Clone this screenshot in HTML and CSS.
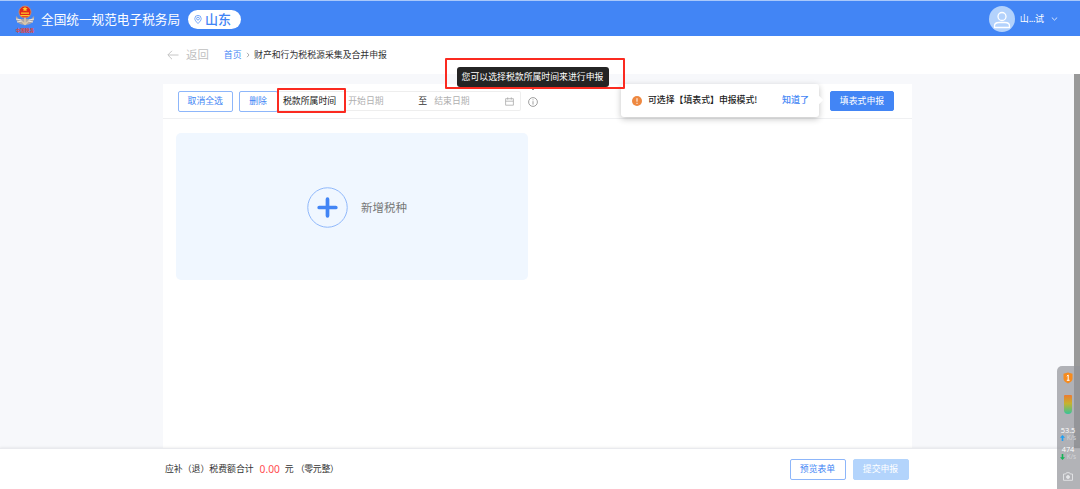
FILE: index.html
```html
<!DOCTYPE html>
<html lang="zh-CN">
  <head>
    <meta charset="UTF-8" />
    <meta name="viewport" content="width=device-width, initial-scale=1.0" />
    <title>财产和行为税税源采集及合并申报</title>
    <link rel="stylesheet" href="styles.css">
  </head>
  <body>
    <header class="header">
      <svg class="emblem" viewBox="0 0 20 28">
        <path d="M1 11c-1 5 3 9 9 9s10-4 9-9l-3 3H4z" fill="#a9a4a8" />
        <path d="M1 14l5 1M2 17l5-1M19 14l-5 1M18 17l-5-1" stroke="#e9e5df" stroke-width="1" />
        <circle cx="10" cy="7" r="6" fill="#e0281c" stroke="#d9905c" stroke-width="0.8" />
        <path d="M10 1.500l.8 1.600 1.800.2-1.300 1.200.3 1.800L10 5.500l-1.600.8.3-1.800-1.300-1.200 1.800-.2zM6 7.500h8v1.300H6zM5.500 10h9v1.300h-9z" fill="#ffc928" />
        <path d="M10 12.500v7M7 16.500l3 3 3-3" stroke="#d8c8ab" stroke-width="1.500" fill="none" />
        <text x="10" y="26.500" text-anchor="middle">中国税务</text>
      </svg>
      <h1>全国统一规范电子税务局</h1>
      <div class="region">
        <svg width="8" height="9" viewBox="0 0 8 9" fill="none" stroke="#4285f5" stroke-width="0.7">
          <path d="M4 8.500C2 6.500.8 5.200.8 3.600a3.200 3.200 0 0 1 6.400 0C7.200 5.200 6 6.500 4 8.500z" />
          <circle cx="4" cy="3.600" r="1.400" />
        </svg>
        <span>山东</span>
      </div>
      <div class="user">
        <svg class="avatar" viewBox="0 0 26 26" fill="none" stroke="#fff" stroke-width="1.300">
          <circle cx="13" cy="13" r="13" fill="#b3d2fc" stroke="none" />
          <circle cx="13" cy="10.500" r="4" />
          <path d="M5.500 21.500v-1.500c0-2.200 2-3.500 4.500-3.500h6c2.500 0 4.500 1.300 4.500 3.500v1.500z" />
        </svg>
        <span>山<span class="dots">...</span>试</span>
        <svg class="chevron" viewBox="0 0 7 4" fill="none" stroke="#fff" stroke-width="0.8">
          <path d="M.8.5l2.700 2.600L6.200.5" />
        </svg>
      </div>
    </header>

    <nav class="nav">
      <svg class="back-icon" viewBox="0 0 12 10" fill="none" stroke="#bfbfbf" stroke-width="0.9">
        <path d="M11.500 5H1M5 .8L.8 5 5 9.200" />
      </svg>
      <span class="back">返回</span>
      <a class="home">首页</a>
      <svg class="sep" viewBox="0 0 4 6" fill="none" stroke="#888" stroke-width="0.7">
        <path d="M1 .8L3 3 1 5.200" />
      </svg>
      <span class="current">财产和行为税税源采集及合并申报</span>
    </nav>

    <main class="main">
      <section class="panel">
        <div class="toolbar">
          <button class="btn select-all">取消全选</button>
          <button class="btn delete">删除</button>
          <div class="date-range">
            <span class="date-label">税款所属时间</span>
            <span class="start">开始日期</span>
            <span class="to">至</span>
            <span class="end">结束日期</span>
            <svg class="calendar" viewBox="0 0 9 9" fill="none" stroke="#aaa" stroke-width="0.8">
              <path d="M.6 1.700h7.800v6.500H.6zM.6 4.200h7.800M2.700.4v2.200M6.300.4v2.200" />
            </svg>
          </div>
          <div class="info">
            <svg viewBox="0 0 10 10" fill="none" stroke="#777" stroke-width="0.7">
              <circle cx="5" cy="5" r="4.400" />
              <path d="M5 4.200v3.400M5 2.400v.9" />
            </svg>
            <div class="tooltip">您可以选择税款所属时间来进行申报</div>
          </div>
          <button class="btn primary form-mode">填表式申报</button>
          <div class="popover">
            <svg class="warn" viewBox="0 0 10 10">
              <circle cx="5" cy="5" r="5" fill="#ee8840" />
              <path d="M5 2.200v3.500M5 6.800v1.100" stroke="#fff" stroke-width="1" />
            </svg>
            <span>可选择【填表式】申报模式!</span>
            <a>知道了</a>
          </div>
        </div>
        <div class="add-card">
          <svg viewBox="0 0 42 42" fill="none" stroke="#4285f5">
            <circle cx="21" cy="21" r="20.200" stroke="#8db6fa" stroke-width="1" />
            <path d="M21 12.500v17M12.500 21h17" stroke-width="3.800" stroke-linecap="round" />
          </svg>
          <span>新增税种</span>
        </div>
      </section>
      <div class="scrollbar"></div>
    </main>

    <footer class="footer">
      <span>应补（退）税费额合计</span>
      <span class="amount">0.00</span>
      <span>元</span>
      <span class="words">（零元整）</span>
      <button class="btn preview">预览表单</button>
      <button class="btn submit">提交申报</button>
    </footer>

    <!-- highlighted areas -->
    <div class="mark mark-label"></div>
    <div class="mark mark-tip"></div>

    <!-- desktop monitor widget -->
    <aside class="monitor">
      <svg class="shield" viewBox="0 0 10 12">
        <path d="M5 .5l4.500 1.300v5C9.500 9 7.500 10.500 5 11.500 2.500 10.500.5 9 .5 6.800v-5z" fill="#f68b1e" />
        <path d="M3.800 4.200L5.200 3v5.300M3.800 8.300h2.800" stroke="#fff" stroke-width="1" fill="none" />
      </svg>
      <div class="gauge"></div>
      <div class="speed">
        53.5
        <small>
          <svg viewBox="0 0 5 6"><path d="M2.500 0L5 2.800H3.300V6H1.700V2.800H0z" fill="#1ea0f5" /></svg>
          K/s
        </small>
      </div>
      <div class="speed">
        474
        <small>
          <svg viewBox="0 0 5 6"><path d="M2.500 6L5 3.200H3.300V0H1.700v3.200H0z" fill="#16b458" /></svg>
          K/s
        </small>
      </div>
      <svg class="camera" viewBox="0 0 10 9" fill="none" stroke="#e4e5e8" stroke-width="0.9">
        <path d="M.5 2h2.200l.8-1.300h3L7.300 2h2.200v6.300h-9z" />
        <circle cx="5" cy="5" r="1.500" fill="#e4e5e8" />
      </svg>
    </aside>
  </body>
</html>
```
FILE: styles.css
```css
* {
  box-sizing: border-box;
}

body {
  margin: 0;
  height: 489px;
  display: flex;
  flex-direction: column;
  position: relative;
  overflow: hidden;
  font-family: "Noto Sans CJK SC", sans-serif;
  font-size: 8.87px;
  line-height: 1.4;
  color: #333;
  background-color: #f7f8fb;
}

svg {
  display: block;
  flex: none;
}

span,
a {
  white-space: nowrap;
}

.header {
  height: 36px;
  flex: none;
  display: flex;
  align-items: center;
  padding: 1px 22px 0 15px;
  border-top: 1px solid #a9c8fa;
  background-color: #4285f5;
  color: #fff;
}

.emblem {
  width: 20px;
  height: 28px;
}

.emblem text {
  font-size: 4.6px;
  font-weight: bold;
  fill: #e5412f;
}

.header h1 {
  margin: 0 0 0 6px;
  font-size: 12.65px;
  font-weight: 400;
}

.region {
  display: flex;
  align-items: center;
  gap: 3px;
  width: 53px;
  height: 19px;
  margin: 1px 0 0 8px;
  padding-left: 6px;
  border-radius: 10px;
  background-color: #fff;
  color: #4285f5;
  font-size: 13px;
  font-weight: 500;
}

.user {
  display: flex;
  align-items: center;
  margin-left: auto;
  font-size: 9px;
}

.dots {
  letter-spacing: -0.4px;
}

.avatar {
  width: 26px;
  height: 26px;
  margin-right: 5px;
}

.chevron {
  width: 7px;
  height: 4px;
  margin-left: 7px;
}

.nav {
  height: 38px;
  flex: none;
  display: flex;
  align-items: center;
  padding-left: 167px;
  background-color: #fff;
}

.back-icon {
  width: 12px;
  height: 10px;
}

.back {
  margin-left: 7px;
  font-size: 11.4px;
  color: #bfbfbf;
}

.home {
  margin-left: 15px;
  color: #4285f5;
}

.sep {
  width: 4px;
  height: 6px;
  margin: 0 4.5px 0 4px;
}

.main {
  flex: 1;
  display: flex;
  padding-left: 163px;
}

.panel {
  width: 749px;
  margin-top: 10px;
  background-color: #fff;
}

.toolbar {
  position: relative;
  display: flex;
  align-items: center;
  height: 35px;
  padding: 0 18px 0 14.5px;
  border-bottom: 1px solid #eff0f2;
}

.btn {
  height: 21px;
  padding: 0;
  border: 1px solid #8db6fa;
  border-radius: 2px;
  background-color: #fff;
  color: #4285f5;
  font: inherit;
}

.select-all {
  width: 55.5px;
}

.delete {
  width: 39px;
  margin-left: 5.5px;
}

.date-range {
  display: flex;
  align-items: center;
  width: 243px;
  height: 20px;
  padding: 0 6px 0 5.5px;
  border: 1px solid #eee;
  border-left: none;
  border-radius: 2px;
  color: #b0b0b0;
}

.date-label {
  color: #222;
}

.start {
  width: 70px;
  margin-left: 12px;
}

.to {
  width: 16px;
  color: #333;
}

.calendar {
  width: 9px;
  height: 9px;
  margin-left: auto;
}

.info {
  position: relative;
  margin: 1px 0 0 7px;
}

.info svg {
  width: 10px;
  height: 10px;
}

.tooltip {
  position: absolute;
  left: -71px;
  bottom: 20px;
  width: 152px;
  height: 20px;
  border-radius: 3px;
  background-color: #242424;
  color: #fff;
  line-height: 20px;
  text-align: center;
  white-space: nowrap;
}

.tooltip::after {
  content: "";
  position: absolute;
  left: 73px;
  top: 20px;
  border: 3px solid transparent;
  border-top-color: #242424;
}

.primary {
  border-color: #4285f5;
  background-color: #4285f5;
  color: #fff;
}

.form-mode {
  width: 64px;
  height: 20px;
  margin-left: auto;
}

.popover {
  position: absolute;
  left: 458px;
  top: 0;
  display: flex;
  align-items: center;
  width: 198px;
  height: 33px;
  padding: 0 10px 0 11px;
  border-radius: 3px;
  background-color: #fff;
  box-shadow: 0 2px 6px rgba(0, 0, 0, 0.24);
  color: #222;
  font-weight: 500;
}

.popover::after {
  content: "";
  position: absolute;
  right: -3px;
  top: 13px;
  width: 6px;
  height: 6px;
  background-color: #fff;
  transform: rotate(45deg);
}

.warn {
  width: 10px;
  height: 10px;
  margin-right: 6px;
}

.popover a {
  margin-left: auto;
  color: #4285f5;
  font-size: 9px;
}

.add-card {
  display: flex;
  align-items: center;
  width: 352px;
  height: 147px;
  margin: 14px 0 0 13px;
  padding: 1px 0 0 131px;
  border-radius: 5px;
  background-color: #f0f7ff;
  color: #777;
  font-size: 11.5px;
}

.add-card svg {
  width: 41px;
  height: 41px;
  margin-right: 13px;
}

.scrollbar {
  width: 6px;
  margin-left: auto;
  background-color: #999;
}

.footer {
  height: 41px;
  flex: none;
  display: flex;
  align-items: center;
  padding: 1px 171.5px 0 165px;
  border-top: 1px solid #e9eaee;
  background-color: #fff;
  box-shadow: 0 -1px 2px rgba(0, 0, 0, 0.06);
}

.amount {
  margin: 0 5px 0 6px;
  color: #ff4d4f;
  font-family: "Noto Sans", sans-serif;
  font-size: 10.2px;
}

.words {
  margin-left: 2px;
  letter-spacing: -0.3px;
}

.preview {
  width: 56px;
  margin-left: auto;
}

.submit {
  width: 56px;
  margin-left: 7px;
  border-color: #b3d4fc;
  background-color: #b3d4fc;
  color: #fff;
}

.mark {
  position: absolute;
  border: 2px solid #fb2a20;
  border-radius: 1px;
}

.mark-label {
  left: 277px;
  top: 88px;
  width: 69px;
  height: 25px;
}

.mark-tip {
  left: 445px;
  top: 58px;
  width: 180px;
  height: 31px;
}

.monitor {
  position: absolute;
  right: 0;
  bottom: 0;
  display: flex;
  flex-direction: column;
  align-items: center;
  width: 23px;
  height: 123px;
  padding: 6px 1px 0 0;
  border-radius: 5px 0 0 0;
  background-color: rgba(145, 147, 153, 0.7);
  color: #fff;
}

.shield {
  width: 10px;
  height: 12px;
}

.gauge {
  width: 8px;
  height: 19px;
  margin: 11px 0 12px;
  border-radius: 1px 1px 4px 4px;
  background: linear-gradient(#ee7b30, #c5b32f 45%, #35c49a);
}

.speed {
  height: 19px;
  font-family: "Open Sans", sans-serif;
  font-size: 7.4px;
  line-height: 8px;
  text-align: center;
}

.speed small {
  display: flex;
  align-items: center;
  justify-content: center;
  gap: 2px;
  font-size: 6.4px;
  line-height: 8px;
  color: #d5d6d9;
}

.speed svg {
  width: 5px;
  height: 6px;
}

.camera {
  width: 10px;
  height: 9px;
  margin-top: 8px;
}
```
